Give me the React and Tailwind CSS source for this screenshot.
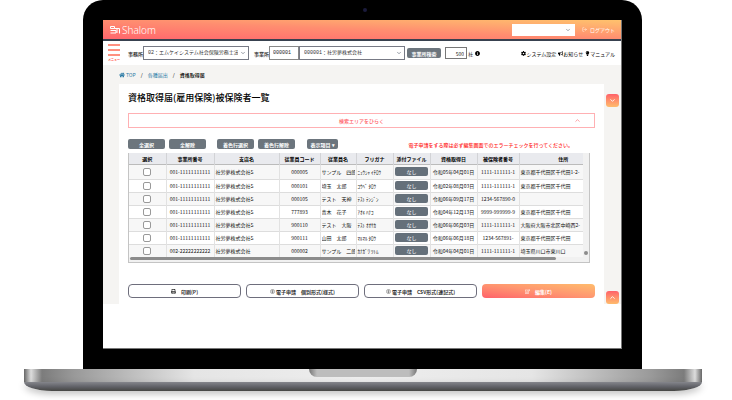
import { FaBullhorn, FaCog, FaHome, FaInfoCircle, FaLightbulb, FaPrint, FaRegEdit } from "react-icons/fa";
import { ChevronDown, ChevronUp, LogOut } from "lucide-react";

const rows = [
  { office: "001-11111111111", branch: "社労夢株式会社S", code: "000005", name: "サンプル　四郎", kana: "ﾆｭｳｼｬ ｲﾁﾛｳ", date: "令和05年04月01日", number: "1111-111111-1", address: "東京都千代田区千代田1-2-" },
  { office: "001-11111111111", branch: "社労夢株式会社S", code: "000101", name: "埼玉　太郎", kana: "ｺｳﾍﾞ ﾀﾛｳ", date: "令和02年08月03日", number: "1111-111111-1", address: "東京都千代田区千代田" },
  { office: "001-11111111111", branch: "社労夢株式会社S", code: "000105", name: "テスト　天神", kana: "ﾃｽﾄ ﾃﾝｼﾞﾝ", date: "令和06年09月17日", number: "1234-567890-0", address: "" },
  { office: "001-11111111111", branch: "社労夢株式会社S", code: "777893", name: "青木　花子", kana: "ｱｵｷ ﾊﾅｺ", date: "令和04年12月13日", number: "9999-999999-9", address: "東京都千代田区千代田" },
  { office: "001-11111111111", branch: "社労夢株式会社S", code: "900110", name: "テスト　大阪", kana: "ﾃｽﾄ ｵｵｻｶ", date: "令和06年06月03日", number: "1111-111111-1", address: "大阪府大阪市北区中崎西2-" },
  { office: "001-11111111111", branch: "社労夢株式会社S", code: "900111", name: "山田　太郎", kana: "ﾏﾙﾏﾙ ﾀﾛｳ", date: "令和06年06月18日", number: "1234-567891-", address: "東京都千代田区千代田" },
  { office: "002-22222222222", branch: "社労夢株式会社", code: "000002", name: "サンプル　二郎", kana: "ｶﾅｶﾞﾜ ﾂﾄﾑ", date: "令和04年04月01日", number: "1111-111111-1", address: "埼玉県川口市東川口" },
];

const columns = [
  { label: "選択", width: "w-[37px]" },
  { label: "事業所番号", width: "w-[48px]" },
  { label: "支店名", width: "w-[65px]" },
  { label: "従業員コード", width: "w-[41px]" },
  { label: "従業員名", width: "w-[36px]" },
  { label: "フリガナ", width: "w-[37px]" },
  { label: "添付ファイル", width: "w-[37px]" },
  { label: "資格取得日", width: "w-[47px]" },
  { label: "被保険者番号", width: "w-[42px]" },
  { label: "住所", width: "pl-6" },
];

const Logo = () => (
  <svg viewBox="0 0 20 16" className="w-[10px] h-2" fill="none" stroke="white" strokeWidth="2">
    <path d="M1 1h8v4H1zM1 9h11v5H1M9 5h5v9M14 5h5v10" />
  </svg>
);

const Select = ({ label, children, className }) => (
  <div className={`relative ${className}`}>
    <select aria-label={label} className="block w-full h-[14px] pl-1 pr-[10px] appearance-none bg-white border border-[#777a85] font-['Liberation_Mono','Noto_Sans_CJK_JP',monospace] text-[#333]">
      {children}
    </select>
    <ChevronDown className="absolute right-[3px] top-1 size-[6px] text-gray-700 pointer-events-none" />
  </div>
);

const SmallButton = ({ children, className }) => (
  <button type="button" className={`h-[10px] rounded-[2px] bg-[#6c757d] font-bold text-white ${className}`}>
    {children}
  </button>
);

const OutlineButton = ({ children }) => (
  <button type="button" className="flex items-center justify-center gap-1 h-[14px] rounded-[4px] border border-[#6e6e7c] bg-white font-bold text-[#333]">
    {children}
  </button>
);

const ScrollButton = ({ label, children }) => (
  <button type="button" aria-label={label} className="flex items-center justify-center w-[13px] h-[13px] rounded-[3px] bg-linear-to-b from-[#ff6069] to-[#ffbb6c] text-white">
    {children}
  </button>
);

const CircledMark = () => (
  <svg viewBox="0 0 12 12" className="size-[5px] -mr-[3px]" fill="none" stroke="#444">
    <circle cx="6" cy="6" r="5" />
    <path d="M3 5h6M6 2v8M4 8h4" />
  </svg>
);

const TopBar = () => (
  <header className="flex items-center h-[21px] pl-[7px] pr-[6px] border-b-2 border-[#38414f] bg-linear-to-tr from-[#ff666d] via-[#ff8d70] to-[#ffc26d] text-white">
    <Logo />
    <span className="ml-[2px] font-['Noto_Sans',sans-serif] text-[10px] leading-[12px] font-light">Shalom</span>
    <div className="relative ml-auto">
      <select aria-label="ユーザー" className="block w-[63px] h-3 bg-white appearance-none" />
      <ChevronDown className="absolute right-1 top-[3px] size-[6px] text-gray-600 pointer-events-none" />
    </div>
    <a href="#logout" className="flex items-center gap-[3px] ml-[7px]">
      <LogOut className="size-[5px]" />
      ログアウト
    </a>
  </header>
);

const Toolbar = () => (
  <div className="flex items-center h-6 pl-[5px] pr-[6px] bg-white">
    <button type="button" className="w-3 text-[3px] leading-[4px] font-bold text-[#ff4a3a]">
      <span className="flex flex-col gap-[3px] mb-[2px]">
        <span className="h-[2px] bg-[#ff9080]" />
        <span className="h-[2px] bg-[#ff9080]" />
        <span className="h-[2px] bg-[#ff9080]" />
      </span>
      メニュー
    </button>
    <span className="ml-2 font-medium">事務所</span>
    <Select label="事務所" className="w-[106px]">
      <option>02：エムケイシステム社会保険労務士法人</option>
    </Select>
    <span className="ml-[5px] font-medium">事業所</span>
    <input aria-label="事業所コード" defaultValue="000001" className="w-[30px] h-[14px] px-[3px] border border-[#888] font-['Liberation_Mono',monospace]" />
    <Select label="事業所" className="w-[106px]">
      <option>000001：社労夢株式会社</option>
    </Select>
    <SmallButton className="w-[34px] ml-[2px]">事業所検索</SmallButton>
    <input aria-label="件数" defaultValue="500" className="w-[22px] h-3 ml-1 px-[2px] border border-[#777] text-right" />
    <span className="ml-px mr-[2px]">社</span>
    <FaInfoCircle className="size-[5px] text-black" />
    <nav className="flex gap-[2px] ml-auto text-black">
      <a href="#settings" className="flex items-center"><FaCog className="size-[5px]" />システム設定</a>
      <a href="#news" className="flex items-center"><FaBullhorn className="size-[5px]" />お知らせ</a>
      <a href="#manual" className="flex items-center"><FaLightbulb className="size-[5px]" />マニュアル</a>
    </nav>
  </div>
);

const InsuredTable = () => (
  <div className="mt-1 mr-[5px] border border-[#c4c4c4] border-t-0 bg-[#f1f1f1]">
    <div className="flex bg-white">
      <table className="flex-1 w-0 table-fixed border-collapse text-[#111]">
        <thead>
          <tr className="h-[11px] bg-[#e9eaee] border-b border-[#bbb]">
            {columns.map((col) => (
              <th key={col.label} className={`p-0 border-r border-[#d2d3d6] last:border-r-0 font-bold text-black whitespace-nowrap ${col.width}`}>
                {col.label}
              </th>
            ))}
          </tr>
        </thead>
        <tbody>
          {rows.map((row, i) => (
            <tr key={i} className="h-[13px] first:h-[15px] odd:bg-[#f7f7f7] border-b border-[#ddd] last:border-b-0 [&>td]:p-0 [&>td]:border-r [&>td]:border-[#e2e2e2] [&>td:last-child]:border-r-0">
              <td>
                <input type="checkbox" aria-label={row.name} className="block mx-auto size-2 appearance-none rounded-[2px] border border-[#999] bg-white" />
              </td>
              <td className="text-center whitespace-nowrap">{row.office}</td>
              <td><div className="px-px">{row.branch}</div></td>
              <td className="text-center">{row.code}</td>
              <td><div className="mx-px overflow-hidden whitespace-nowrap">{row.name}</div></td>
              <td><div className="px-px whitespace-nowrap">{row.kana}</div></td>
              <td>
                <button type="button" className="block w-[33px] h-[9px] mx-auto rounded-[2px] bg-[#65707a] text-white">なし</button>
              </td>
              <td className="text-center whitespace-nowrap">{row.date}</td>
              <td className="text-center whitespace-nowrap">{row.number}</td>
              <td><div className="ml-px whitespace-nowrap">{row.address}</div></td>
            </tr>
          ))}
        </tbody>
      </table>
      <div className="flex flex-col justify-end items-center w-[6px] pb-[2px] bg-[#f1f1f1]">
        <span className="size-1 rounded-full bg-[#8c8c8c]" />
      </div>
    </div>
    <div className="h-1 mr-[33px] ml-px mb-px">
      <div className="h-[3px] rounded-full bg-[#8c8c8c]" />
    </div>
  </div>
);

const App = () => {
  return (
    <div className="pl-6 pr-[30px] overflow-hidden bg-white font-['Noto_Sans_CJK_JP','Noto_Sans',sans-serif] text-[5px] leading-[7px] text-[#222]">
      {/* laptop lid */}
      <div className="relative ml-[59px] mr-[60px] p-5 rounded-t-[20px] bg-black">
        <span className="absolute left-1/2 top-2 size-1 rounded-full bg-[#1b1b3c]" />
        <div className="bg-white border-b border-r border-[#777] pb-11">
          <TopBar />
          <Toolbar />
          <div className="bg-[#f5f4f2]">
            <nav className="flex items-center gap-[5px] h-[19px] pl-4 text-[#2d7ba6]">
              <a href="#top" className="flex items-center gap-px"><FaHome className="size-[6px]" />TOP</a>
              <span className="text-black">/</span>
              <a href="#forms">各種届出</a>
              <span className="text-black">/</span>
              <span className="font-medium text-black">資格取得届</span>
            </nav>
            <div className="flex pl-4">
              <main className="flex-1 min-w-0 px-[9px] pt-2 pb-[6px] bg-white">
                <h1 className="text-[9px] leading-[12px] font-medium text-black">資格取得届(雇用保険)被保険者一覧</h1>
                <button type="button" className="flex items-center w-full h-[15px] mt-[9px] pr-[13px] border border-[#ffb0b3] font-medium text-[#ff5c64]">
                  <span className="flex-1 pl-5">検索エリアをひらく</span>
                  <ChevronUp className="size-[7px]" />
                </button>
                <div className="flex items-center mt-[11px]">
                  <SmallButton className="w-[37px]">全選択</SmallButton>
                  <SmallButton className="w-[37px] ml-1">全解除</SmallButton>
                  <SmallButton className="w-[37px] ml-[11px]">着色行選択</SmallButton>
                  <SmallButton className="w-[37px] ml-1">着色行解除</SmallButton>
                  <SmallButton className="w-[31px] ml-3">表示項目 ▾</SmallButton>
                  <p className="ml-auto mr-[22px] font-medium text-[#ff1a1a] whitespace-nowrap">電子申請をする際は必ず編集画面でのエラーチェックを行ってください。</p>
                </div>
                <InsuredTable />
                <div className="grid grid-cols-4 gap-[5px] mt-[21px]">
                  <OutlineButton><FaPrint className="size-[5px] mr-px" />印刷(P)</OutlineButton>
                  <OutlineButton><CircledMark />電子申請　個別形式(様式)</OutlineButton>
                  <OutlineButton><CircledMark />電子申請　CSV形式(連記式)</OutlineButton>
                  <button type="button" className="flex items-center justify-center gap-[5px] rounded-[4px] bg-linear-to-tr from-[#ff6069] via-[#ff9570] to-[#ffbc6c] font-bold text-white">
                    <FaRegEdit className="size-[5px]" />編集(E)
                  </button>
                </div>
              </main>
              <div className="flex flex-col items-center justify-between w-[17px] pt-[10px]">
                <ScrollButton label="下へ"><ChevronDown className="size-[7px]" strokeWidth={3} /></ScrollButton>
                <ScrollButton label="上へ"><ChevronUp className="size-[7px]" strokeWidth={3} /></ScrollButton>
              </div>
            </div>
          </div>
        </div>
      </div>

      {/* laptop base */}
      <div className="flex justify-center h-[13px] bg-[linear-gradient(90deg,#666_0,#ddd_7px,#7c7c7c_18px,#999_50px,#e5e5e5_170px,#eee_50%,#e5e5e5_calc(100%-170px),#999_calc(100%-50px),#7c7c7c_calc(100%-18px),#ddd_calc(100%-7px),#666_100%)]">
        <div className="w-[108px] h-2 rounded-b-[8px] bg-[linear-gradient(90deg,#777,#bdbdbd_8px,#bdbdbd_calc(100%-8px),#777)]" />
      </div>
      <div className="h-[9px] [border-radius:0_0_28px_28px/0_0_9px_9px] bg-linear-to-b from-[#85868c] via-[#626369] to-[#454543] shadow-[0_3px_7px_#00000040]" />
      <div className="h-[10px]" />
    </div>
  );
};

export default App;
